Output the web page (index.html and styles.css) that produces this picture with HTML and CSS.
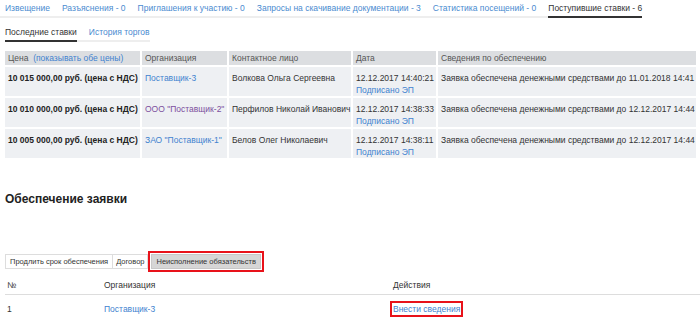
FILE: index.html
```html
<!DOCTYPE html>
<html>

<head>
    <meta charset="utf-8">
    <title>Поступившие ставки</title>
    <link rel="stylesheet" href="styles.css">
</head>

<body>
    <div class="tabs tabs-main">
        <a class="tab">Извещение</a>
        <a class="tab">Разъяснения - 0</a>
        <a class="tab">Приглашения к участию - 0</a>
        <a class="tab">Запросы на скачивание документации - 3</a>
        <a class="tab">Статистика посещений - 0</a>
        <a class="tab active">Поступившие ставки - 6</a>
    </div>
    <div class="tabs tabs-sub">
        <a class="tab active">Последние ставки</a>
        <a class="tab">История торгов</a>
    </div>

    <table class="bids">
        <tr>
            <th class="col-price">Цена &nbsp;<a class="link">(показывать обе цены)</a></th>
            <th class="col-org">Организация</th>
            <th class="col-contact">Контактное лицо</th>
            <th class="col-date">Дата</th>
            <th>Сведения по обеспечению</th>
        </tr>
        <tr>
            <td class="price">10 015 000,00 руб. (цена с НДС)</td>
            <td><a class="link">Поставщик-3</a></td>
            <td>Волкова Ольга Сергеевна</td>
            <td>12.12.2017 14:40:21<br><a class="link">Подписано ЭП</a></td>
            <td>Заявка обеспечена денежными средствами до 11.01.2018 14:41</td>
        </tr>
        <tr>
            <td class="price">10 010 000,00 руб. (цена с НДС)</td>
            <td><a class="link visited">ООО "Поставщик-2"</a></td>
            <td>Перфилов Николай Иванович</td>
            <td>12.12.2017 14:38:33<br><a class="link">Подписано ЭП</a></td>
            <td>Заявка обеспечена денежными средствами до 12.12.2017 14:44</td>
        </tr>
        <tr>
            <td class="price">10 005 000,00 руб. (цена с НДС)</td>
            <td><a class="link">ЗАО "Поставщик-1"</a></td>
            <td>Белов Олег Николаевич</td>
            <td>12.12.2017 14:38:11<br><a class="link">Подписано ЭП</a></td>
            <td>Заявка обеспечена денежными средствами до 12.12.2017 14:44</td>
        </tr>
    </table>

    <h2 class="section-title">Обеспечение заявки</h2>

    <div class="button-group">
        <span class="btn">Продлить срок обеспечения</span>
        <span class="btn">Договор</span>
        <span class="btn-mark"><span class="btn selected">Неисполнение обязательств</span></span>
    </div>

    <table class="guarantee">
        <tr>
            <th class="col-num">№</th>
            <th class="col-gorg">Организация</th>
            <th>Действия</th>
        </tr>
        <tr>
            <td>1</td>
            <td><a class="link">Поставщик-3</a></td>
            <td><a class="link marked">Внести сведения</a></td>
        </tr>
    </table>
</body>

</html>
```

FILE: styles.css
```css
* {
    margin: 0;
    padding: 0;
    box-sizing: border-box;
}

body {
    font-family: "Liberation Sans", Arial, sans-serif;
    font-size: 8.5px;
    color: #333;
    background: #fff;
}

table {
    font-size: inherit;
}

.link {
    color: #4182cf;
}

.visited {
    color: #7d4f9e;
}

.tabs {
    display: flex;
    gap: 12px;
    font-size: 8.5px;
    line-height: 12px;
    white-space: nowrap;
}

.tab {
    color: #4a8bd0;
    padding-bottom: 2px;
    border-bottom: 2px solid transparent;
    margin-bottom: -2px;
}

.tab.active {
    color: #333;
    border-bottom-color: #333;
}

.tabs-main {
    width: fit-content;
    padding: 2px 0 0 5px;
    border-bottom: 2px solid #eee;
}

.tabs-sub {
    width: fit-content;
    margin: 6px 0 0 5px;
    padding-top: 2px;
    border-bottom: 2px solid #eee;
}

.bids {
    margin: 7px 0 0 3px;
    width: 695px;
    table-layout: fixed;
    border-collapse: separate;
    border-spacing: 2px;
    line-height: 12px;
}

.bids th {
    background: #dcdee1;
    font-weight: normal;
    text-align: left;
    color: #555;
    padding: 1px 3px;
    white-space: nowrap;
}

.bids td {
    background: #eef0f3;
    vertical-align: top;
    padding: 5px 3px 0 3px;
    height: 29px;
    white-space: nowrap;
}

.bids td.price {
    font-weight: bold;
    color: #222;
}

.col-price {
    width: 135px;
}

.col-org {
    width: 85px;
}

.col-contact {
    width: 122px;
}

.col-date {
    width: 83px;
}

.section-title {
    margin: 31px 0 0 5px;
    font-size: 12px;
    line-height: 16px;
    color: #222;
}

.button-group {
    display: flex;
    align-items: center;
    margin: 44px 0 0 5px;
    font-size: 7.5px;
}

.btn {
    display: block;
    border: 1px solid #ddd;
    background: #fff;
    color: #333;
    padding: 1px 4px;
    line-height: 11px;
}

.btn + .btn {
    border-left: none;
    padding: 1px 3px;
}

.btn.selected {
    background: #d6d6d6;
    border-color: #c8c8c8;
}

.btn-mark {
    display: block;
    border: 2px solid #e8121a;
    padding: 1px;
}

.guarantee {
    margin: 5px 0 0 5px;
    width: 695px;
    border-collapse: collapse;
    line-height: 12px;
}

.guarantee th {
    font-weight: normal;
    text-align: left;
    color: #333;
    padding: 2px 2px 3px 2px;
    border-bottom: 1px solid #ddd;
}

.guarantee td {
    padding: 8px 2px;
}

.col-num {
    width: 97px;
}

.col-gorg {
    width: 289px;
}

.marked {
    outline: 2px solid #e8121a;
    outline-offset: 1px;
}
```
